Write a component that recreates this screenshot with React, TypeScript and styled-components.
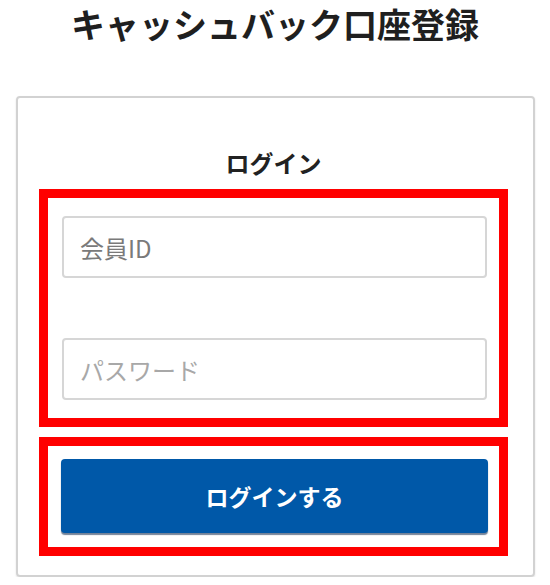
import React from "react";
import styled, { createGlobalStyle } from "styled-components";

const GlobalStyle = createGlobalStyle`
  html, body {
    margin: 0;
    padding: 0;
    background: #ffffff;
  }
  body {
    font-family: "Noto Sans CJK JP", "Noto Sans", sans-serif;
    color: #222222;
  }
`;

const Page = styled.div`
  width: 550px;
  display: flex;
  flex-direction: column;
  padding-top: 3px;
`;

const Title = styled.h1`
  margin: 0;
  font-size: 34px;
  line-height: 41px;
  font-weight: 700;
  text-align: center;
  color: #1f1f1f;
`;

const Card = styled.div`
  margin: 52px 0 0 16px;
  width: 519px;
  height: 481px;
  box-sizing: border-box;
  border: 2px solid #d2d2d2;
  border-radius: 4px;
  box-shadow: 0 1px 2px rgba(0, 0, 0, 0.12);
  display: flex;
  flex-direction: column;
  padding: 48px 25px 0 21px;
`;

const Heading = styled.h2`
  margin: 0 0 9px;
  font-size: 24px;
  line-height: 34px;
  font-weight: 700;
  text-align: center;
  color: #222222;
`;

const Highlight = styled.div<{ $gap?: number }>`
  border: 9px solid #ff0000;
  display: flex;
  flex-direction: column;
  gap: ${(p) => p.$gap ?? 0}px;
  margin-bottom: 10px;
`;

const FieldBox = styled(Highlight)`
  padding: 18px 12px 18px 14px;
`;

const ButtonBox = styled(Highlight)`
  padding: 13px 11px 14px 13px;
`;

const Field = styled.input<{ $muted?: boolean }>`
  height: 62px;
  box-sizing: border-box;
  border: 2px solid #d6d6d6;
  border-radius: 4px;
  padding: 0 16px;
  font-family: "Noto Sans CJK JP", "Noto Sans", sans-serif;
  font-size: 24px;
  color: #333333;
  outline: none;
  &::placeholder {
    color: ${(p) => (p.$muted ? "#a8a8a8" : "#7a7a7a")};
  }
`;

const LoginButton = styled.button`
  height: 74px;
  border: none;
  border-radius: 4px;
  background: #0058a8;
  box-shadow: 0 2px 1px rgba(0, 30, 70, 0.55);
  color: #ffffff;
  font-family: "Noto Sans CJK JP", "Noto Sans", sans-serif;
  font-size: 23px;
  font-weight: 700;
  cursor: pointer;
`;

export default function App() {
  return (
    <>
      <GlobalStyle />
      <Page>
        <Title>キャッシュバック口座登録</Title>
        <Card>
          <Heading>ログイン</Heading>
          <FieldBox $gap={60}>
            <Field type="text" placeholder="会員ID" />
            <Field type="password" placeholder="パスワード" $muted />
          </FieldBox>
          <ButtonBox>
            <LoginButton type="button">ログインする</LoginButton>
          </ButtonBox>
        </Card>
      </Page>
    </>
  );
}
